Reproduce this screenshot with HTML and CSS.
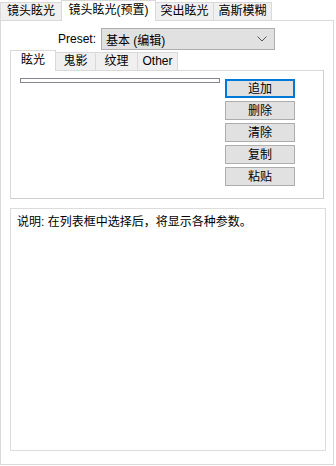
FILE: index.html
```html
<!DOCTYPE html>
<html lang="zh-CN">
<head>
    <meta charset="UTF-8">
    <title>镜头眩光(预置)</title>
    <link rel="stylesheet" href="styles.css">
</head>
<body>
    <div class="tabs">
        <div class="tab tab-a">镜头眩光</div>
        <div class="tab tab-b active">镜头眩光(预置)</div>
        <div class="tab tab-c">突出眩光</div>
        <div class="tab tab-d">高斯模糊</div>
    </div>
    <div class="panel">
        <div class="preset-row">
            <label class="preset-label">Preset:</label>
            <div class="combo">
                <span>基本 (编辑)</span>
                <svg class="chevron" width="10" height="6" viewBox="0 0 10 6">
                    <path d="M0.5 0.5 L5 5 L9.5 0.5" fill="none" stroke="#555" stroke-width="1"/>
                </svg>
            </div>
        </div>

        <div class="subtabs">
            <div class="subtab st-a active">眩光</div>
            <div class="subtab st-b">鬼影</div>
            <div class="subtab st-c">纹理</div>
            <div class="subtab st-d">Other</div>
        </div>
        <div class="subpanel">
            <div class="listbox"></div>
            <div class="buttons">
                <button class="btn default">追加</button>
                <button class="btn">删除</button>
                <button class="btn">清除</button>
                <button class="btn">复制</button>
                <button class="btn">粘贴</button>
            </div>
        </div>

        <div class="desc">说明: 在列表框中选择后，将显示各种参数。</div>
    </div>
</body>
</html>
```

FILE: styles.css
```css
/* Base */
* {
    margin: 0;
    padding: 0;
    box-sizing: border-box;
}

body {
    width: 336px;
    height: 466px;
    background: #ffffff;
    font-family: 'Liberation Sans', 'Noto Sans CJK SC', sans-serif;
    font-size: 12px;
    color: #000;
    overflow: hidden;
}

/* Outer tab strip */
.tabs {
    display: flex;
    align-items: flex-end;
    height: 20px;
}

.tab {
    height: 18px;
    line-height: 16px;
    text-align: center;
    background: #f0f0f0;
    border: 1px solid #d9d9d9;
    border-bottom: none;
    white-space: nowrap;
}

.tab + .tab {
    margin-left: -1px;
}

.tab.active {
    position: relative;
    z-index: 1;
    height: 21px;
    line-height: 19px;
    margin-bottom: -1px;
    background: #ffffff;
}

.tab-a { width: 62px; }
.tab-b { width: 95px; }
.tab-c { width: 59px; }
.tab-d { width: 59px; }

/* Outer page */
.panel {
    width: 334px;
    height: 445px;
    border: 1px solid #d9d9d9;
    background: #ffffff;
    padding: 7px 0 0 9px;
}

.preset-row {
    display: flex;
    align-items: center;
    gap: 5px;
    height: 22px;
}

.preset-label {
    width: 86px;
    text-align: right;
    color: #000;
}

.combo {
    display: flex;
    align-items: center;
    justify-content: space-between;
    width: 174px;
    height: 22px;
    padding: 0 7px 0 4px;
    background: #e1e1e1;
    border: 1px solid #adadad;
}

/* Inner tab strip */
.subtabs {
    display: flex;
    align-items: flex-end;
    height: 20px;
}

.subtab {
    height: 18px;
    line-height: 16px;
    text-align: center;
    background: #f0f0f0;
    border: 1px solid #d9d9d9;
    border-bottom: none;
}

.subtab + .subtab {
    margin-left: -1px;
}

.subtab.active {
    position: relative;
    z-index: 1;
    height: 21px;
    line-height: 18px;
    margin-bottom: -1px;
    background: #ffffff;
}

.st-a { width: 46px; }
.st-b { width: 41px; }
.st-c { width: 43px; }
.st-d { width: 41px; }

.subpanel {
    display: flex;
    align-items: flex-start;
    width: 314px;
    height: 129px;
    border: 1px solid #d9d9d9;
    border-right-color: #cfcfcf;
    border-bottom-color: #cfcfcf;
    padding: 7px 0 0 9px;
}

.listbox {
    width: 200px;
    height: 5px;
    border: 1px solid #828790;
    background: #ffffff;
}

.buttons {
    display: flex;
    flex-direction: column;
    gap: 3px;
    margin: 1px 0 0 5px;
}

.btn {
    width: 70px;
    height: 19px;
    background: #e1e1e1;
    border: 1px solid #adadad;
    font-family: inherit;
    font-size: 12px;
    line-height: 16px;
    color: #000;
}

.btn.default {
    border: 2px solid #0078d7;
}

/* Description box */
.desc {
    width: 316px;
    height: 243px;
    margin-top: 9px;
    border: 1px solid #dcdcdc;
    padding: 4px 6px;
    line-height: 18px;
}
```
